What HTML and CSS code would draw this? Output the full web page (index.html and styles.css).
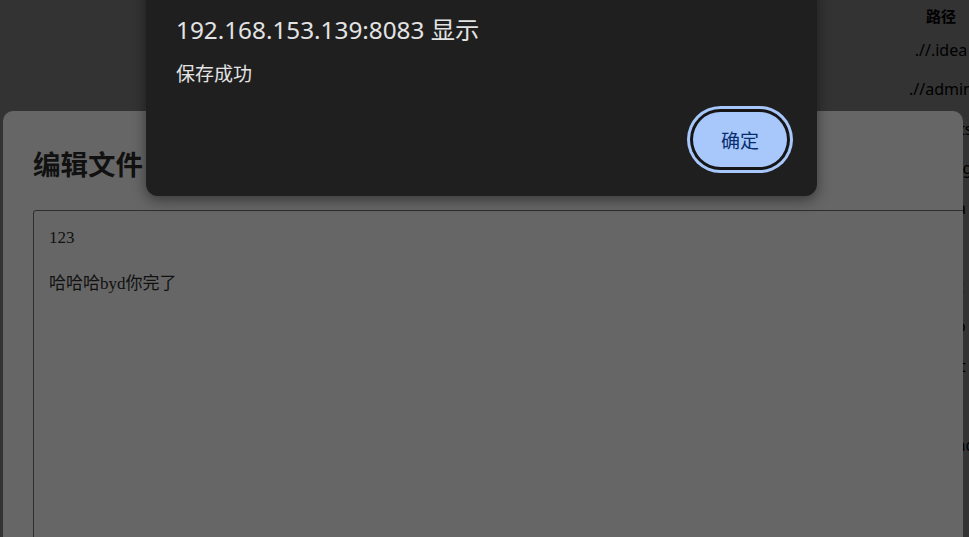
FILE: index.html
```html
<!DOCTYPE html>
<html>
<head>
    <meta charset="utf-8">
    <meta name="viewport" content="width=device-width, initial-scale=1">
    <title>文件管理</title>
    <link rel="stylesheet" href="styles.css">
</head>

<body>
    <div class="page">
        <table class="file-table">
            <thead>
                <tr><th>路径</th></tr>
            </thead>
            <tbody>
                <tr><td>.//.idea</td></tr>
                <tr><td>.//admin</td></tr>
                <tr><td>.//assets</td></tr>
                <tr><td>.//config</td></tr>
                <tr><td>.//data</td></tr>
                <tr><td>.//a</td></tr>
                <tr><td>.//edit</td></tr>
                <tr><td>.//logo</td></tr>
                <tr><td>.//1.txt</td></tr>
                <tr><td>.//test</td></tr>
                <tr><td>.//upload</td></tr>
                <tr><td>.//ios</td></tr>
                <tr><td>.//list</td></tr>
            </tbody>
        </table>
    </div>

    <!-- edit dialog -->
    <div class="modal">
        <h2 class="modal-title">编辑文件</h2>
        <textarea class="editor" spellcheck="false">123

哈哈哈byd你完了</textarea>
    </div>

    <!-- browser alert -->
    <div class="alert">
        <div class="alert-title">192.168.153.139:8083 显示</div>
        <div class="alert-msg">保存成功</div>
        <div class="alert-actions">
            <button class="alert-btn">确定</button>
        </div>
    </div>
</body>
</html>
```

FILE: styles.css
```css
/* page behind the dialogs (already dimmed) */
body {
    margin: 0;
    padding: 0;
    background-color: #333;
    font-family: "Noto Sans", "Noto Sans CJK SC", sans-serif;
    overflow: hidden;
    height: 537px;
}
.page {
    display: flex;
    justify-content: flex-end;
    margin-right: -32px;
}
.file-table {
    border-collapse: collapse;
    color: #000;
}
.file-table th {
    width: 120px;
    height: 30px;
    padding: 0;
    font-size: 15px;
    font-weight: bold;
    text-align: center;
    font-family: "Noto Sans CJK SC", sans-serif;
}
.file-table td {
    height: 39.5px;
    padding: 0;
    font-size: 16px;
    text-align: center;
    white-space: nowrap;
}

/* edit file modal */
.modal {
    position: absolute;
    left: 3px;
    top: 111px;
    width: 960px;
    height: 480px;
    box-sizing: border-box;
    padding: 36px 30px 0;
    background-color: #666;
    border-radius: 10px;
    overflow: hidden;
}
.modal-title {
    margin: 0 0 31px;
    font-family: "Noto Sans CJK SC", sans-serif;
    font-size: 27.5px;
    line-height: 32px;
    font-weight: bold;
    color: #111;
}
.editor {
    display: block;
    width: 100%;
    height: 400px;
    margin: 0;
    padding: 15px;
    border: 1px solid #2e2e2e;
    border-radius: 3px;
    background-color: #666;
    color: #111;
    font-family: "Liberation Serif", "Noto Sans CJK SC", serif;
    font-size: 17px;
    line-height: 23px;
    resize: none;
    outline: none;
}

/* alert box on top */
.alert {
    position: absolute;
    left: 146px;
    top: -20px;
    width: 671px;
    box-sizing: border-box;
    padding: 34px 30px 29px;
    background-color: #1f1f1f;
    border-radius: 12px;
    box-shadow: 0 4px 14px rgba(0, 0, 0, 0.45);
    color: #e3e3e3;
}
.alert-title {
    font-size: 24.3px;
    line-height: 32px;
}
.alert-msg {
    margin-top: 15px;
    font-size: 19px;
    line-height: 26px;
}
.alert-actions {
    display: flex;
    justify-content: flex-end;
    margin-top: 25px;
}
.alert-btn {
    width: 94px;
    height: 55px;
    border: none;
    border-radius: 28px;
    background-color: #a8c7fa;
    color: #062e6f;
    font-family: "Noto Sans CJK SC", sans-serif;
    font-size: 19px;
    box-shadow: 0 0 0 3px #161616, 0 0 0 6px #a8c7fa;
    cursor: pointer;
}
```
